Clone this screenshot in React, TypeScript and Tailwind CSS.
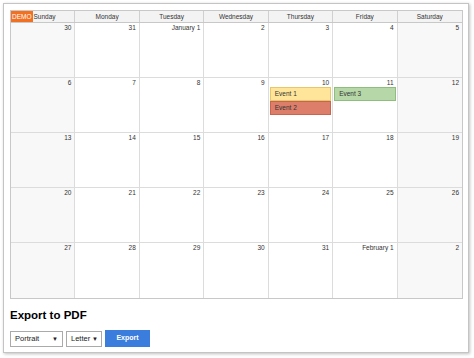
import React from "react";

type Ev = { text: string; bg: string; border: string };

const days = ["Sunday", "Monday", "Tuesday", "Wednesday", "Thursday", "Friday", "Saturday"];

const weeks: string[][] = [
  ["30", "31", "January 1", "2", "3", "4", "5"],
  ["6", "7", "8", "9", "10", "11", "12"],
  ["13", "14", "15", "16", "17", "18", "19"],
  ["20", "21", "22", "23", "24", "25", "26"],
  ["27", "28", "29", "30", "31", "February 1", "2"],
];

// events keyed by "week-day"
const events: Record<string, Ev[]> = {
  "1-4": [
    { text: "Event 1", bg: "bg-[#ffe599]", border: "border-[#e8c76a]" },
    { text: "Event 2", bg: "bg-[#dd7e6b]", border: "border-[#c9644f]" },
  ],
  "1-5": [{ text: "Event 3", bg: "bg-[#b6d7a8]", border: "border-[#8fbd7c]" }],
};

function DayCell({ label, w, d }: { label: string; w: number; d: number }) {
  const weekend = d === 0 || d === 6;
  const list = events[`${w}-${d}`] || [];
  return (
    <div
      className={`h-[55px] flex flex-col border-[#dcdcdc] ${d < 6 ? "border-r" : ""} ${
        w < 4 ? "border-b" : ""
      } ${weekend ? "bg-[#f8f8f8]" : "bg-white"}`}
    >
      <div className="h-[9px] pr-[3px] pt-[1px] text-right leading-[8px]">{label}</div>
      {list.map((e) => (
        <div
          key={e.text}
          className={`mx-[1px] h-[14px] border ${e.bg} ${e.border} pl-[4px] leading-[12px] text-[#333]`}
        >
          {e.text}
        </div>
      ))}
    </div>
  );
}

export default function App() {
  return (
    <div className="w-[474px] h-[358px] bg-white p-[3px]" style={{ fontFamily: '"Liberation Sans", Arial, sans-serif' }}>
      <div className="w-[466px] h-[350px] border border-[#c4c4c4] shadow-[1px_1px_3px_rgba(0,0,0,0.25)] pl-[6px] pt-[6px]">
        {/* calendar */}
        <div className="w-[453px] border border-[#c8c8c8] text-[6.5px] text-[#333]">
          <div className="grid grid-cols-7 h-[12px] bg-[#f3f3f3] border-b border-[#c8c8c8]">
            {days.map((day, i) =>
              i === 0 ? (
                <div key={day} className="flex items-stretch border-r border-[#d0d0d0]">
                  <span className="px-[1px] bg-[#f37021] text-white flex items-center">DEMO</span>
                  <span className="flex items-center pl-[1px]">{day}</span>
                </div>
              ) : (
                <div
                  key={day}
                  className={`flex items-center justify-center border-[#d0d0d0] ${i < 6 ? "border-r" : ""}`}
                >
                  {day}
                </div>
              )
            )}
          </div>
          {weeks.map((wk, w) => (
            <div key={w} className="grid grid-cols-7">
              {wk.map((label, d) => (
                <DayCell key={d} label={label} w={w} d={d} />
              ))}
            </div>
          ))}
        </div>

        {/* export */}
        <div className="mt-[9px] text-[11.5px] font-bold text-black leading-[14px]">Export to PDF</div>
        <div className="mt-[8px] flex items-center gap-[3px] text-[7.5px] text-[#222]">
          <div className="relative">
            <select className="appearance-none w-[53px] h-[16px] border border-[#aaa] bg-white pl-[4px] outline-none">
              <option>Portrait</option>
              <option>Landscape</option>
            </select>
            <span className="pointer-events-none absolute right-[5px] top-[4px] text-[6px]">▼</span>
          </div>
          <div className="relative">
            <select className="appearance-none w-[36px] h-[16px] border border-[#aaa] bg-white pl-[4px] outline-none">
              <option>Letter</option>
              <option>A4</option>
            </select>
            <span className="pointer-events-none absolute right-[4px] top-[4px] text-[6px]">▼</span>
          </div>
          <button className="w-[45px] h-[17px] bg-[#3b7ddd] text-white text-[7px] font-bold">Export</button>
        </div>
      </div>
    </div>
  );
}
